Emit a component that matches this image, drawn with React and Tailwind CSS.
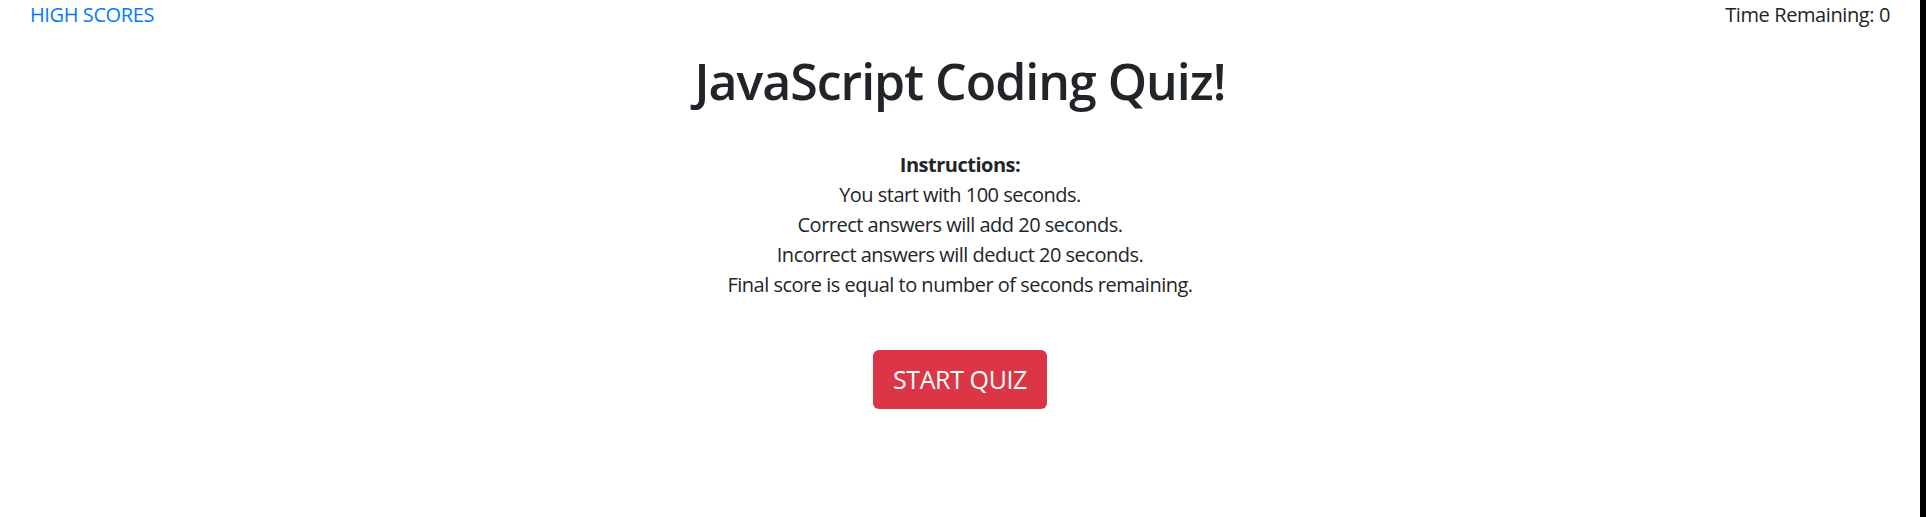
export default function App() {
  return (
    <div className="flex h-[517px] w-full bg-white text-[#212529] font-['Open_Sans','Noto_Sans',sans-serif]">
      <div className="flex-1 flex flex-col">
        <header className="flex justify-between px-[30px] text-[20px] leading-[30px] tracking-[-0.4px]">
          <a href="#" className="text-[#007bff]">HIGH SCORES</a>
          <span>Time Remaining: 0</span>
        </header>

        <h1 className="mt-[21px] text-center text-[50px] leading-[60px] font-semibold tracking-[-1px]">
          JavaScript Coding Quiz!
        </h1>

        <div className="mt-[39px] text-center text-[20px] leading-[30px] tracking-[-0.5px]">
          <p className="font-bold">Instructions:</p>
          <p>You start with 100 seconds.</p>
          <p>Correct answers will add 20 seconds.</p>
          <p>Incorrect answers will deduct 20 seconds.</p>
          <p>Final score is equal to number of seconds remaining.</p>
        </div>

        <div className="mt-[50px] flex justify-center">
          <button className="h-[59px] px-[20px] rounded-[6px] bg-[#dc3545] text-white text-[25px] leading-[37px] tracking-[-0.4px]">
            START QUIZ
          </button>
        </div>
      </div>
      <div className="w-[6px] bg-black" />
    </div>
  );
}
